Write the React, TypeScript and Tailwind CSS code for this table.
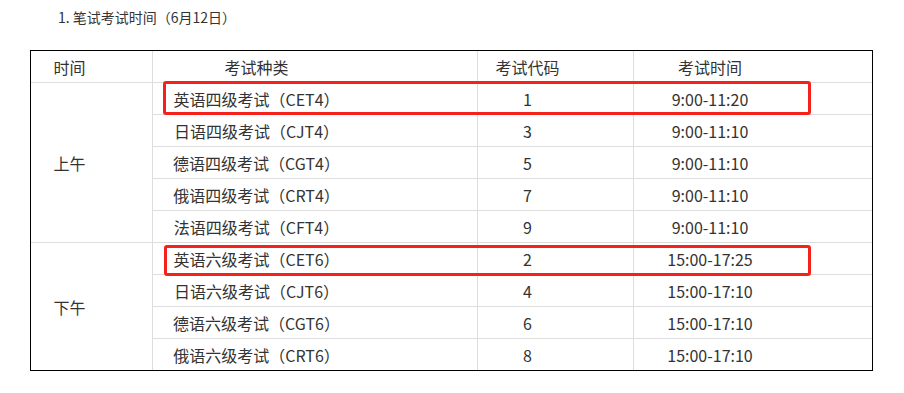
const rows = [
  { name: '英语四级考试（CET4）', code: '1', time: '9:00-11:20' },
  { name: '日语四级考试（CJT4）', code: '3', time: '9:00-11:10' },
  { name: '德语四级考试（CGT4）', code: '5', time: '9:00-11:10' },
  { name: '俄语四级考试（CRT4）', code: '7', time: '9:00-11:10' },
  { name: '法语四级考试（CFT4）', code: '9', time: '9:00-11:10' },
  { name: '英语六级考试（CET6）', code: '2', time: '15:00-17:25' },
  { name: '日语六级考试（CJT6）', code: '4', time: '15:00-17:10' },
  { name: '德语六级考试（CGT6）', code: '6', time: '15:00-17:10' },
  { name: '俄语六级考试（CRT6）', code: '8', time: '15:00-17:10' },
];

const cell = 'flex items-center justify-center border-[#dddddd]';

export default function App() {
  return (
    <div
      className="w-[904px] h-[393px] bg-white text-[#333333]"
      style={{ fontFamily: '"Noto Sans CJK SC", "Noto Sans", sans-serif' }}
    >
      <p className="pl-[58px] pt-[7px] text-[14px] leading-[20px]">1. 笔试考试时间（6月12日）</p>

      <div className="relative ml-[30px] mt-[23px] w-[843px]">
        <div className="grid grid-cols-[122px_325px_156px_238px] grid-rows-[repeat(9,32px)_31px] border border-black text-[16px]">
          {/* header */}
          <div className={`${cell} border-b border-r pr-[44px]`}>时间</div>
          <div className={`${cell} border-b border-r pr-[117px]`}>考试种类</div>
          <div className={`${cell} border-b border-r pr-[56px]`}>考试代码</div>
          <div className={`${cell} border-b pr-[86px]`}>考试时间</div>

          {rows.map((r, i) => {
            const last = i === rows.length - 1;
            const b = last ? '' : 'border-b';
            return (
              <div key={r.name} className="contents">
                {i === 0 && <div className={`${cell} row-span-5 border-b border-r pr-[44px]`}>上午</div>}
                {i === 5 && <div className={`${cell} row-span-4 border-r pr-[44px]`}>下午</div>}
                <div className={`${cell} ${b} border-r pr-[117px]`}>{r.name}</div>
                <div className={`${cell} ${b} border-r pr-[56px]`}>{r.code}</div>
                <div className={`${cell} ${b} pr-[86px]`}>{r.time}</div>
              </div>
            );
          })}
        </div>

        {/* highlight boxes */}
        <div className="absolute left-[133px] top-[31px] w-[648px] h-[34px] rounded-[3px] border-[3px] border-[#f5221b]" />
        <div className="absolute left-[134px] top-[195px] w-[647px] h-[31px] rounded-[3px] border-[3px] border-[#f5221b]" />
      </div>
    </div>
  );
}
